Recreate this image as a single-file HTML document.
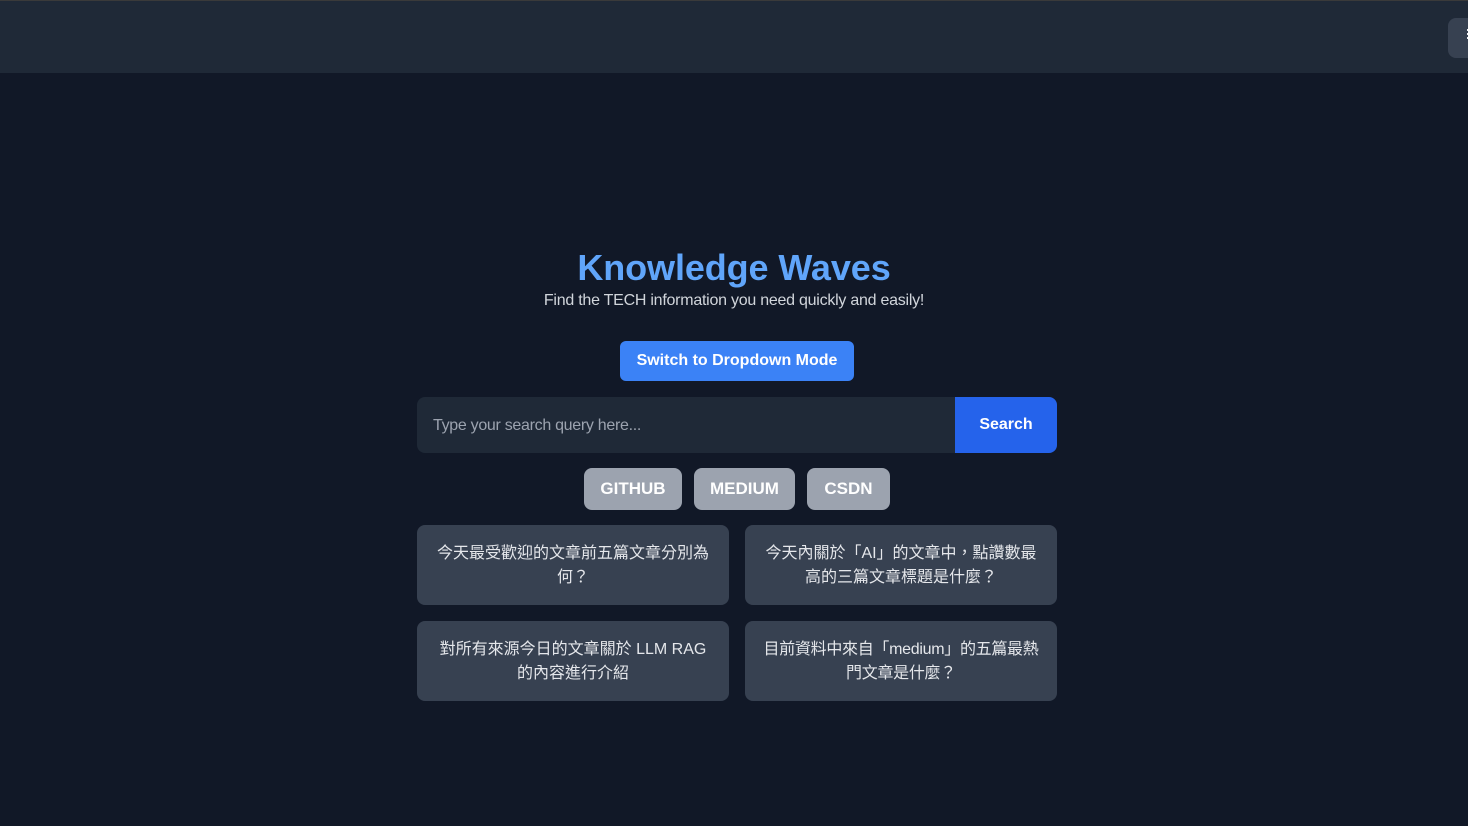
<!DOCTYPE html>
<html><head><meta charset="utf-8"><style>
*{box-sizing:border-box;margin:0;padding:0}
body{width:1468px;height:826px;background:#111827;font-family:"Liberation Sans","Noto Sans CJK TC",sans-serif;position:relative;overflow:hidden}
.top{position:absolute;left:0;top:0;width:1468px;height:73px;background:#1f2937;border-top:1px solid #3a3a3a}
.tb{position:absolute;left:1448px;top:17px;width:40px;height:40px;background:#374151;border-radius:8px;color:#fff;font-size:14px;padding:9px 0 0 17px}
h1{position:absolute;left:0;width:1468px;top:247px;text-align:center;color:#60a5fa;font-size:36px;font-weight:bold;letter-spacing:-0.1px}
.sub{position:absolute;left:0;width:1468px;top:292px;text-align:center;color:#d1d5db;font-size:16px;letter-spacing:-0.25px}
.sw{position:absolute;left:620px;top:341px;width:234px;height:40px;background:#3b82f6;border-radius:6px;color:#fff;font-weight:bold;font-size:16px;text-align:center;line-height:40px}
.inp{position:absolute;left:417px;top:397px;width:538px;height:56px;background:#1f2937;border-radius:8px 0 0 8px;color:#9ca3af;font-size:16px;line-height:57px;padding-left:16px;letter-spacing:-0.3px}
.sb{position:absolute;left:955px;top:397px;width:102px;height:56px;background:#2563eb;border-radius:0 8px 8px 0;color:#fff;font-weight:bold;font-size:16px;text-align:center;line-height:55px}
.tag{position:absolute;top:468px;height:42px;background:#9ca3af;border-radius:8px;color:#fff;font-size:17px;font-weight:bold;text-align:center;line-height:41px}
.c{position:absolute;width:312px;height:80px;background:#374151;border-radius:8px;color:#e5e7eb;font-size:16px;line-height:24px;text-align:center;padding:17px 0 0;white-space:nowrap}
</style></head><body>
<div class="top"><div class="tb">⠿</div></div>
<h1>Knowledge Waves</h1>
<div class="sub">Find the TECH information you need quickly and easily!</div>
<div class="sw">Switch to Dropdown Mode</div>
<div class="inp">Type your search query here...</div>
<div class="sb">Search</div>
<div class="tag" style="left:584px;width:98px">GITHUB</div>
<div class="tag" style="left:694px;width:101px">MEDIUM</div>
<div class="tag" style="left:807px;width:83px">CSDN</div>
<div class="c" style="left:417px;top:525px">今天最受歡迎的文章前五篇文章分別為<br>何？</div>
<div class="c" style="left:745px;top:525px">今天內關於「AI」的文章中，點讚數最<br>高的三篇文章標題是什麼？</div>
<div class="c" style="left:417px;top:621px">對所有來源今日的文章關於 LLM RAG<br>的內容進行介紹</div>
<div class="c" style="left:745px;top:621px;letter-spacing:-0.3px">目前資料中來自「medium」的五篇最熱<br>門文章是什麼？</div>
</body></html>
